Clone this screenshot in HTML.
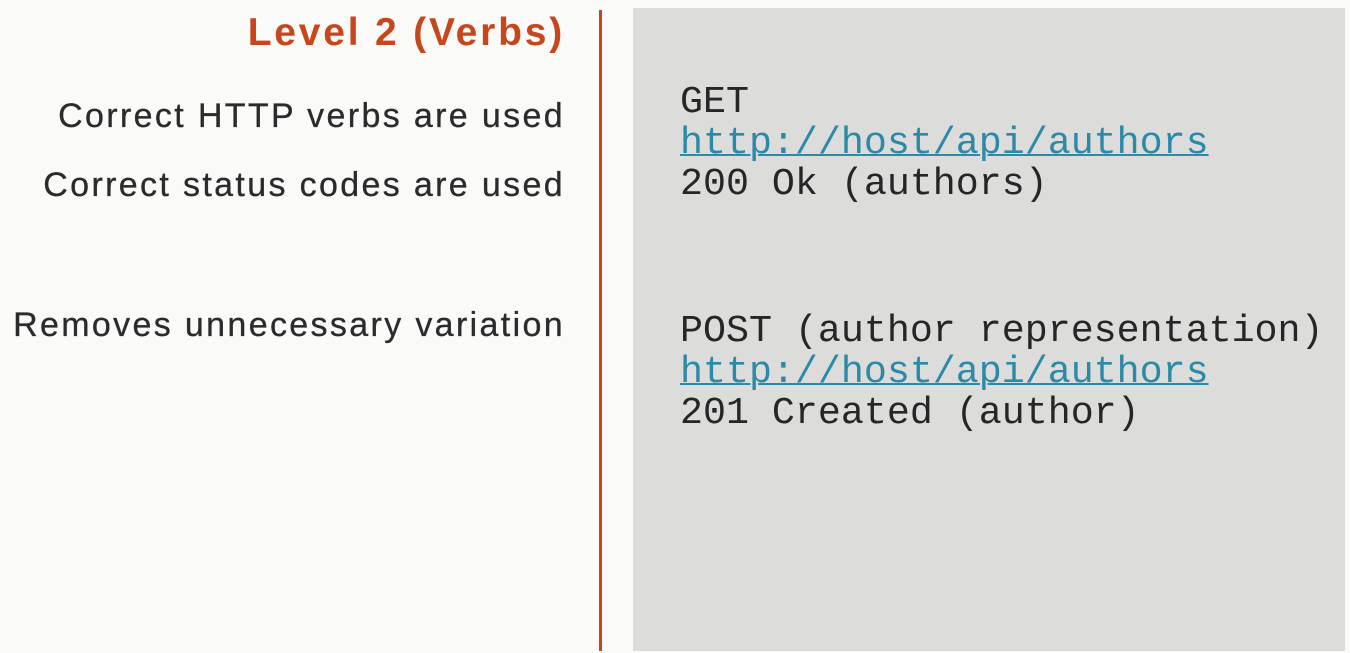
<!DOCTYPE html>
<html><head><meta charset="utf-8"><style>
html,body{margin:0;padding:0}
body{width:1350px;height:653px;background:#fafaf9;position:relative;overflow:hidden;font-family:"Liberation Sans",sans-serif}
.l{position:absolute;right:785px;white-space:nowrap;color:#2b2b2b;font-size:34px;line-height:1;letter-spacing:2.35px;-webkit-text-stroke:0.3px #2b2b2b}
.h{color:#c8461c;font-weight:bold;font-size:39px;letter-spacing:2.8px;right:785px;-webkit-text-stroke:0}
.bar{position:absolute;left:599px;top:10px;width:3px;height:641px;background:#c8461c}
.box{position:absolute;left:633px;top:8px;width:712px;height:643px;background:#dcdcdb}
.m{position:absolute;left:680px;font-family:"Liberation Mono",monospace;font-size:38.3px;line-height:41px;color:#262626;white-space:pre}
.m a{color:#2a8aa8;text-decoration:underline;text-decoration-thickness:2px}
</style></head><body>
<div class="l h" style="top:13px">Level 2 (Verbs)</div>
<div class="l" style="top:99px">Correct HTTP verbs are used</div>
<div class="l" style="top:168px">Correct status codes are used</div>
<div class="l" style="top:308px">Removes unnecessary variation</div>
<div class="bar"></div>
<div class="box"></div>
<div class="m" style="top:82px">GET
<a>http://host/api/authors</a>
200 Ok (authors)</div>
<div class="m" style="top:311px">POST (author representation)
<a>http://host/api/authors</a>
201 Created (author)</div>
</body></html>
